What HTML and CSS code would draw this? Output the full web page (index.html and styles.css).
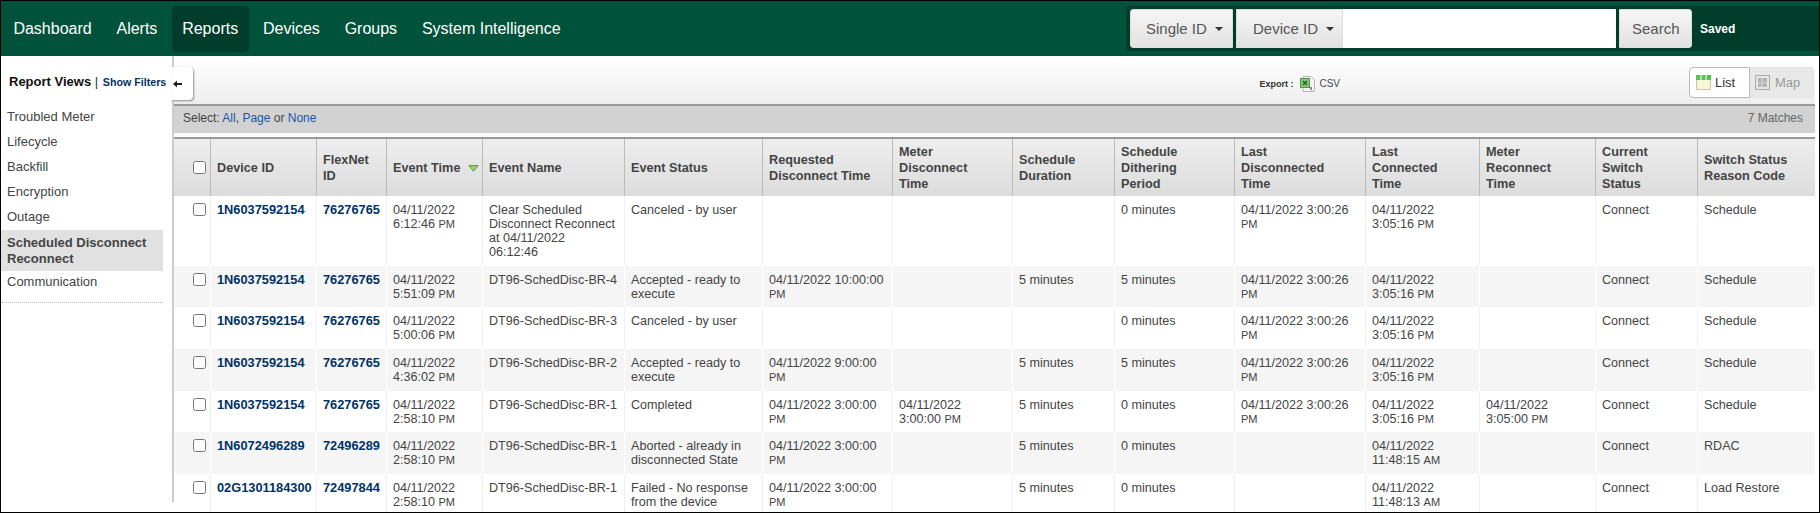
FILE: index.html
```html
<!DOCTYPE html>
<html lang="en">
<head>
    <meta charset="UTF-8">
    <meta name="viewport" content="width=device-width, initial-scale=1.0">
    <title>Reports</title>
    <link rel="stylesheet" href="styles.css">
</head>
<body>

<!-- Top navigation -->
<div class="navbar">
    <a class="nav-item">Dashboard</a>
    <a class="nav-item">Alerts</a>
    <a class="nav-item active">Reports</a>
    <a class="nav-item">Devices</a>
    <a class="nav-item">Groups</a>
    <a class="nav-item">System Intelligence</a>

    <div class="search-box">
        <div class="search-btn">Single ID <span class="caret"></span></div>
        <div class="search-btn device-btn">Device ID <span class="caret"></span></div>
        <input class="search-input" type="text">
        <div class="search-btn submit-btn">Search</div>
        <div class="saved">Saved</div>
    </div>
</div>

<div class="main">
    <!-- Report views sidebar -->
    <div class="sidebar">
        <div class="sidebar-title"><b>Report Views</b> <span class="pipe">|</span> <a class="show-filters">Show Filters</a></div>
        <div class="filter-tab">
            <svg width="9" height="8" viewBox="0 0 9 8"><path d="M0 4 L4 0.5 V3 H9 V5 H4 V7.5 Z" fill="#222"/></svg>
        </div>
        <ul class="view-list">
            <li>Troubled Meter</li>
            <li>Lifecycle</li>
            <li>Backfill</li>
            <li>Encryption</li>
            <li>Outage</li>
            <li class="current">Scheduled Disconnect Reconnect</li>
            <li>Communication</li>
        </ul>
    </div>

    <div class="content">
        <div class="toolbar">
            <div class="export">
                <b>Export :</b>
                <svg width="16" height="16" viewBox="0 0 16 16">
                    <path d="M3 .5 H11 L14.5 4 V15.5 H3 Z" fill="#f4f4f4" stroke="#b5b5b5"/>
                    <rect x=".5" y="2.5" width="9" height="9" fill="#8cc47a" stroke="#4f9a45"/>
                    <path d="M3 5 L7 9 M7 5 L3 9" stroke="#1d5f20" stroke-width="1.3"/>
                    <path d="M11 11 V14" stroke="#444" stroke-width="1.2"/>
                </svg>
                <span class="csv">CSV</span>
            </div>
            <div class="view-toggle">
                <div class="toggle-btn on">
                    <svg width="15" height="15" viewBox="0 0 15 15">
                        <rect width="15" height="15" fill="#f6f4cf"/>
                        <rect width="15" height="5" fill="#58c258"/>
                        <path d="M5 0 V15 M10 0 V15" stroke="#fff" stroke-width="1"/>
                        <path d="M.5 5 V14.5 H14.5 V5" fill="none" stroke="#c9c9b0"/>
                    </svg>
                    List
                </div>
                <div class="toggle-btn off">
                    <svg width="15" height="15" viewBox="0 0 15 15">
                        <rect x=".5" y=".5" width="14" height="14" fill="#e6e6e6" stroke="#aaa"/>
                        <rect x="3" y="3" width="9" height="9" fill="#b5b5b5"/>
                        <path d="M3 8 H12 M7 3 V12" stroke="#d8d8d8"/>
                    </svg>
                    Map
                </div>
            </div>
        </div>

        <div class="select-bar">
            <div>Select: <a>All</a>, <a>Page</a> or <a>None</a></div>
            <div class="matches">7 Matches</div>
        </div>

        <table class="events">
            <colgroup>
                <col class="c-check"><col class="c-device"><col class="c-flexnet"><col class="c-time"><col class="c-name">
                <col class="c-status"><col class="c-req"><col class="c-meter"><col class="c-dur"><col class="c-dith">
                <col class="c-lastd"><col class="c-lastc"><col class="c-recon"><col class="c-switch"><col class="c-reason">
            </colgroup>
            <thead>
                <tr>
                    <th class="check"><input type="checkbox"></th>
                    <th>Device ID</th>
                    <th>FlexNet ID</th>
                    <th class="sorted">Event Time <svg class="sort" width="11" height="7" viewBox="0 0 11 7"><path d="M.8 .5 H10.2 L5.5 6.3 Z" fill="#9ad05a" stroke="#5c9c57"/></svg></th>
                    <th>Event Name</th>
                    <th>Event Status</th>
                    <th>Requested Disconnect Time</th>
                    <th>Meter Disconnect Time</th>
                    <th>Schedule Duration</th>
                    <th>Schedule Dithering Period</th>
                    <th>Last Disconnected Time</th>
                    <th>Last Connected Time</th>
                    <th>Meter Reconnect Time</th>
                    <th>Current Switch Status</th>
                    <th>Switch Status Reason Code</th>
                </tr>
            </thead>
            <tbody>
                <tr>
                    <td class="check"><input type="checkbox"></td>
                    <td class="id">1N6037592154</td>
                    <td class="id">76276765</td>
                    <td>04/11/2022 6:12:46 <small>PM</small></td>
                    <td>Clear Scheduled Disconnect Reconnect at 04/11/2022<br>06:12:46</td>
                    <td>Canceled - by user</td>
                    <td></td>
                    <td></td>
                    <td></td>
                    <td>0 minutes</td>
                    <td>04/11/2022 3:00:26 <small>PM</small></td>
                    <td>04/11/2022 3:05:16 <small>PM</small></td>
                    <td></td>
                    <td>Connect</td>
                    <td>Schedule</td>
                </tr>
                <tr>
                    <td class="check"><input type="checkbox"></td>
                    <td class="id">1N6037592154</td>
                    <td class="id">76276765</td>
                    <td>04/11/2022 5:51:09 <small>PM</small></td>
                    <td>DT96-SchedDisc-BR-4</td>
                    <td>Accepted - ready to execute</td>
                    <td>04/11/2022 10:00:00 <small>PM</small></td>
                    <td></td>
                    <td>5 minutes</td>
                    <td>5 minutes</td>
                    <td>04/11/2022 3:00:26 <small>PM</small></td>
                    <td>04/11/2022 3:05:16 <small>PM</small></td>
                    <td></td>
                    <td>Connect</td>
                    <td>Schedule</td>
                </tr>
                <tr>
                    <td class="check"><input type="checkbox"></td>
                    <td class="id">1N6037592154</td>
                    <td class="id">76276765</td>
                    <td>04/11/2022 5:00:06 <small>PM</small></td>
                    <td>DT96-SchedDisc-BR-3</td>
                    <td>Canceled - by user</td>
                    <td></td>
                    <td></td>
                    <td></td>
                    <td>0 minutes</td>
                    <td>04/11/2022 3:00:26 <small>PM</small></td>
                    <td>04/11/2022 3:05:16 <small>PM</small></td>
                    <td></td>
                    <td>Connect</td>
                    <td>Schedule</td>
                </tr>
                <tr>
                    <td class="check"><input type="checkbox"></td>
                    <td class="id">1N6037592154</td>
                    <td class="id">76276765</td>
                    <td>04/11/2022 4:36:02 <small>PM</small></td>
                    <td>DT96-SchedDisc-BR-2</td>
                    <td>Accepted - ready to execute</td>
                    <td>04/11/2022 9:00:00 <small>PM</small></td>
                    <td></td>
                    <td>5 minutes</td>
                    <td>5 minutes</td>
                    <td>04/11/2022 3:00:26 <small>PM</small></td>
                    <td>04/11/2022 3:05:16 <small>PM</small></td>
                    <td></td>
                    <td>Connect</td>
                    <td>Schedule</td>
                </tr>
                <tr>
                    <td class="check"><input type="checkbox"></td>
                    <td class="id">1N6037592154</td>
                    <td class="id">76276765</td>
                    <td>04/11/2022 2:58:10 <small>PM</small></td>
                    <td>DT96-SchedDisc-BR-1</td>
                    <td>Completed</td>
                    <td>04/11/2022 3:00:00 <small>PM</small></td>
                    <td>04/11/2022 3:00:00 <small>PM</small></td>
                    <td>5 minutes</td>
                    <td>0 minutes</td>
                    <td>04/11/2022 3:00:26 <small>PM</small></td>
                    <td>04/11/2022 3:05:16 <small>PM</small></td>
                    <td>04/11/2022 3:05:00 <small>PM</small></td>
                    <td>Connect</td>
                    <td>Schedule</td>
                </tr>
                <tr>
                    <td class="check"><input type="checkbox"></td>
                    <td class="id">1N6072496289</td>
                    <td class="id">72496289</td>
                    <td>04/11/2022 2:58:10 <small>PM</small></td>
                    <td>DT96-SchedDisc-BR-1</td>
                    <td>Aborted - already in disconnected State</td>
                    <td>04/11/2022 3:00:00 <small>PM</small></td>
                    <td></td>
                    <td>5 minutes</td>
                    <td>0 minutes</td>
                    <td></td>
                    <td>04/11/2022 11:48:15 <small>AM</small></td>
                    <td></td>
                    <td>Connect</td>
                    <td>RDAC</td>
                </tr>
                <tr>
                    <td class="check"><input type="checkbox"></td>
                    <td class="id">02G1301184300</td>
                    <td class="id">72497844</td>
                    <td>04/11/2022 2:58:10 <small>PM</small></td>
                    <td>DT96-SchedDisc-BR-1</td>
                    <td>Failed - No response from the device</td>
                    <td>04/11/2022 3:00:00 <small>PM</small></td>
                    <td></td>
                    <td>5 minutes</td>
                    <td>0 minutes</td>
                    <td></td>
                    <td>04/11/2022 11:48:13 <small>AM</small></td>
                    <td></td>
                    <td>Connect</td>
                    <td>Load Restore</td>
                </tr>
            </tbody>
        </table>
    </div>
</div>

</body>
</html>
```

FILE: styles.css
```css
html, body {
    margin: 0;
    padding: 0;
}

body {
    box-sizing: border-box;
    height: 513px;
    overflow: hidden;
    border: 1px solid #000;
    background-color: #fff;
    font-family: "Liberation Sans", Arial, sans-serif;
    color: #444;
}

/* Top navigation */
.navbar {
    display: flex;
    align-items: center;
    height: 55px;
    padding-left: 2px;
    background-color: #00533a;
}

.nav-item {
    margin-right: 4px;
    padding: 14px 10.4px;
    border-radius: 4px;
    color: #fff;
    font-size: 16px;
    line-height: 18px;
}

.nav-item.active {
    background-color: #003e2b;
}

.search-box {
    display: flex;
    align-items: center;
    box-sizing: border-box;
    width: 693px;
    height: 45px;
    margin-left: auto;
    padding-left: 4px;
    background-color: #003e2b;
    border-radius: 4px 0 0 4px;
}

.search-btn {
    display: flex;
    align-items: center;
    box-sizing: border-box;
    width: 103px;
    height: 39px;
    margin-right: 3px;
    padding-left: 15px;
    border: 1px solid #ddd;
    border-radius: 3px 0 0 3px;
    background: linear-gradient(#f6f6f6, #e2e2e2);
    color: #555;
    font-size: 15px;
}

.device-btn {
    width: 107px;
    margin-right: 0;
    padding-left: 16px;
    border-radius: 0;
}

.submit-btn {
    width: 73px;
    margin-left: 3px;
    margin-right: 8px;
    padding-left: 12px;
    border-radius: 0 3px 3px 0;
}

.caret {
    width: 0;
    height: 0;
    margin-left: 8px;
    border-top: 4px solid #333;
    border-left: 4px solid transparent;
    border-right: 4px solid transparent;
}

.search-input {
    box-sizing: border-box;
    width: 273px;
    height: 39px;
    border: none;
    background-color: #fff;
}

.saved {
    color: #fff;
    font-size: 12px;
    font-weight: bold;
}

.main {
    display: flex;
    align-items: flex-start;
}

/* Sidebar */
.sidebar {
    position: relative;
    box-sizing: border-box;
    flex: none;
    width: 173px;
    height: 446px;
    border-right: 2px solid #ccc;
}

.sidebar-title {
    padding: 18px 0 0 8px;
    font-size: 13px;
    line-height: 16px;
    color: #111;
    white-space: nowrap;
}

.pipe {
    margin-right: 1px;
    color: #333;
    font-size: 13px;
}

.show-filters {
    color: #003366;
    font-size: 10.7px;
    font-weight: bold;
}

.filter-tab {
    position: absolute;
    top: 11px;
    left: 171px;
    z-index: 2;
    display: flex;
    align-items: center;
    box-sizing: border-box;
    width: 21px;
    height: 33px;
    padding-left: 1px;
    background-color: #fff;
    border-radius: 0 4px 4px 0;
    box-shadow: 1px 1px 2px rgba(0, 0, 0, 0.4);
}

.view-list {
    width: 162px;
    margin: 14px 0 0;
    padding: 0 0 7.5px;
    list-style: none;
    border-bottom: 1px dotted #bbb;
    font-size: 13px;
    line-height: 16px;
}

.view-list li {
    padding: 4.5px 6px;
}

.view-list li.current {
    margin-top: 1px;
    background-color: #e1e1e1;
    font-weight: bold;
}

.view-list li:last-child {
    padding-top: 3px;
}

/* Main content */
.content {
    flex: none;
    width: 1641px;
}

.toolbar {
    display: flex;
    align-items: center;
    justify-content: flex-end;
    height: 48px;
    background: linear-gradient(#fff, #eee);
}

.export {
    display: flex;
    align-items: center;
    margin-top: 7px;
    margin-right: 349px;
    font-size: 9px;
    color: #333;
}

.export svg {
    margin: 0 3px 0 7px;
}

.csv {
    color: #445;
    font-size: 10px;
}

.view-toggle {
    display: flex;
    height: 31px;
    margin-top: 5px;
    margin-right: 1px;
    font-size: 13px;
}

.toggle-btn {
    display: flex;
    align-items: center;
    gap: 4px;
    box-sizing: border-box;
    padding-left: 6px;
    border: 1px solid #ccc;
}

.toggle-btn svg {
    margin-top: -1px;
}

.toggle-btn.on {
    width: 61px;
    border-color: #bbb;
    border-radius: 4px 0 0 4px;
    background-color: #fff;
    color: #333;
}

.toggle-btn.off {
    width: 64px;
    gap: 5px;
    padding-left: 5px;
    border-color: #e4e4e4;
    border-left: none;
    border-radius: 0 4px 4px 0;
    background-color: #e8e8e8;
    color: #999;
}

.select-bar {
    display: flex;
    justify-content: space-between;
    align-items: center;
    box-sizing: border-box;
    height: 29px;
    padding: 0 12px 3px 9px;
    border-top: 2px solid #999;
    background-color: #d2d2d2;
    font-size: 12px;
    color: #444;
}

.select-bar a {
    color: #1a56a8;
}

.matches {
    color: #666;
}

/* Events table */
.events {
    width: 1641px;
    margin-top: 4px;
    border-collapse: separate;
    border-spacing: 0;
    table-layout: fixed;
    border-top: 2px solid #999;
    font-size: 12.6px;
    line-height: 14px;
}

.c-check { width: 37px; }
.c-device { width: 106px; }
.c-flexnet { width: 70px; }
.c-time { width: 96px; }
.c-name { width: 142px; }
.c-status { width: 138px; }
.c-req { width: 130px; }
.c-meter { width: 120px; }
.c-dur { width: 102px; }
.c-dith { width: 120px; }
.c-lastd { width: 131px; }
.c-lastc { width: 114px; }
.c-recon { width: 116px; }
.c-switch { width: 102px; }
.c-reason { width: 117px; }

.events th {
    height: 57px;
    box-sizing: border-box;
    padding: 0 18px 0 6px;
    border-right: 1px solid #bbb;
    background: linear-gradient(#eee, #dcdcdc);
    color: #444;
    font-size: 12.7px;
    line-height: 16px;
    text-align: left;
    vertical-align: middle;
}

.events th:last-child {
    border-right: none;
    padding-right: 6px;
}

.events th.sorted {
    padding-right: 0;
    white-space: nowrap;
}

.events td {
    padding: 7px 6px 6.7px;
    border-right: 1px solid #f0f0f0;
    vertical-align: top;
}

.events td:last-child {
    border-right: none;
}

.events tbody tr:nth-child(even) td {
    background-color: #f5f5f5;
    border-right-color: #fff;
}

.events th.check,
.events td.check {
    padding: 0 0 0 19px;
}

.events td.check {
    padding-top: 7px;
}

.check input {
    display: block;
    width: 13px;
    height: 13px;
    margin: 0;
}

.events td.id {
    color: #003366;
    font-weight: bold;
    white-space: nowrap;
    font-size: 12.8px;
}

.events small {
    font-size: 11px;
}

.sort {
    margin-left: 4px;
}
```
